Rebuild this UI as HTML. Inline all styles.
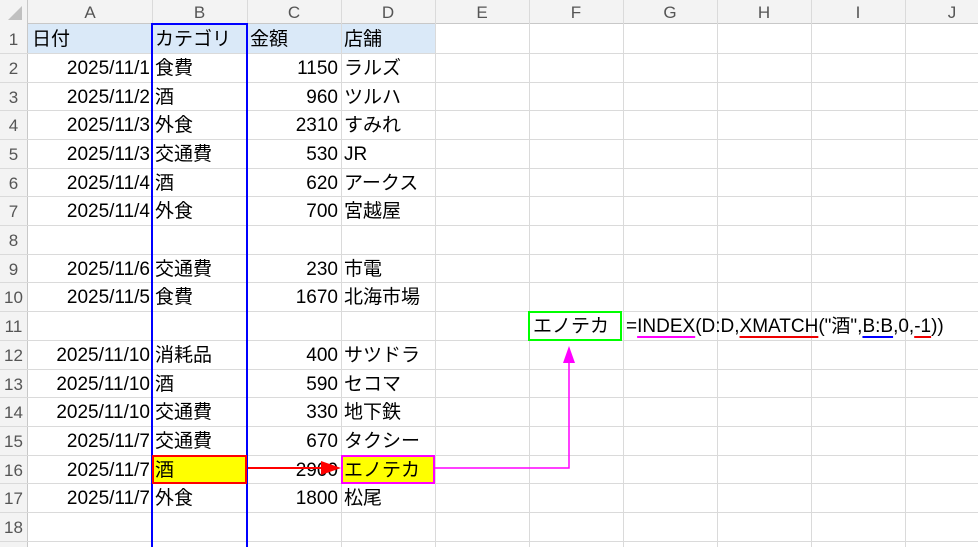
<!DOCTYPE html><html><head><meta charset="utf-8"><style>
*{margin:0;padding:0;box-sizing:border-box}
html{width:978px;height:547px;overflow:hidden}
body{width:978px;height:547px;overflow:hidden;background:#fff;position:relative;font-family:"Liberation Sans","Noto Sans CJK JP",sans-serif;font-size:19px;color:#000}
.vl{position:absolute;top:0;height:547px;width:1px;background:#dadada}
.hl{position:absolute;left:0;right:0;height:1px;background:#dadada}
#ch{position:absolute;left:0;top:0;width:978px;height:24px;background:#f3f3f3;border-bottom:1px solid #c8c8c8}
#rh{position:absolute;left:0;top:0;width:28px;height:547px;background:#f3f3f3;border-right:1px solid #c8c8c8}
.c{position:absolute;top:0;height:24px;line-height:25px;text-align:center;color:#555;font-size:17px}
.rn{position:absolute;left:0;width:27px;text-align:center;color:#555;font-size:17px;height:28.7px;line-height:32px}
.row{position:absolute;left:0;height:28.7px;width:978px;line-height:32px}
.row span{position:absolute;white-space:nowrap}
.a{right:828px}.b{left:155px}.cc{right:640px}.d{left:344px}
</style></head><body>
<div id="ch"></div><div id="rh"></div>
<div style="position:absolute;left:28px;top:24px;width:407px;height:29px;background:#dae9f8"></div>
<div style="position:absolute;left:152px;top:455px;width:95px;height:29px;background:#ffff00"></div>
<div style="position:absolute;left:341px;top:455px;width:94px;height:29px;background:#ffff00"></div>
<div class="vl" style="left:152px"></div><div class="vl" style="left:247px"></div><div class="vl" style="left:341px"></div><div class="vl" style="left:435px"></div><div class="vl" style="left:529px"></div><div class="vl" style="left:623px"></div><div class="vl" style="left:717px"></div><div class="vl" style="left:811px"></div><div class="vl" style="left:905px"></div>
<div class="hl" style="top:53px"></div><div class="hl" style="top:81.5px"></div><div class="hl" style="top:110px"></div><div class="hl" style="top:139px"></div><div class="hl" style="top:167.5px"></div><div class="hl" style="top:196px"></div><div class="hl" style="top:225px"></div><div class="hl" style="top:253.5px"></div><div class="hl" style="top:282px"></div><div class="hl" style="top:311px"></div><div class="hl" style="top:340px"></div><div class="hl" style="top:368.5px"></div><div class="hl" style="top:397px"></div><div class="hl" style="top:426px"></div><div class="hl" style="top:454.5px"></div><div class="hl" style="top:483px"></div><div class="hl" style="top:512px"></div><div class="hl" style="top:540.5px"></div>
<svg style="position:absolute;left:4px;top:4px" width="20" height="18"><polygon points="18,2 18,16 4,16" fill="#c0c0c0"/></svg>
<div class="c" style="left:28px;width:124px">A</div><div class="c" style="left:152px;width:95px">B</div><div class="c" style="left:247px;width:94px">C</div><div class="c" style="left:341px;width:94px">D</div><div class="c" style="left:435px;width:94px">E</div><div class="c" style="left:529px;width:94px">F</div><div class="c" style="left:623px;width:94px">G</div><div class="c" style="left:717px;width:94px">H</div><div class="c" style="left:811px;width:94px">I</div><div class="c" style="left:905px;width:94px">J</div>
<div class="rn" style="top:24px">1</div><div class="rn" style="top:53px">2</div><div class="rn" style="top:81.5px">3</div><div class="rn" style="top:110px">4</div><div class="rn" style="top:139px">5</div><div class="rn" style="top:167.5px">6</div><div class="rn" style="top:196px">7</div><div class="rn" style="top:225px">8</div><div class="rn" style="top:253.5px">9</div><div class="rn" style="top:282px">10</div><div class="rn" style="top:311px">11</div><div class="rn" style="top:340px">12</div><div class="rn" style="top:368.5px">13</div><div class="rn" style="top:397px">14</div><div class="rn" style="top:426px">15</div><div class="rn" style="top:454.5px">16</div><div class="rn" style="top:483px">17</div><div class="rn" style="top:512px">18</div>
<div class="row" style="top:24px"><span style="left:32px">日付</span><span class="b">カテゴリ</span><span style="left:250px">金額</span><span class="d">店舗</span></div>
<div class="row" style="top:53px"><span class="a">2025/11/1</span><span class="b">食費</span><span class="cc">1150</span><span class="d">ラルズ</span></div>
<div class="row" style="top:81.5px"><span class="a">2025/11/2</span><span class="b">酒</span><span class="cc">960</span><span class="d">ツルハ</span></div>
<div class="row" style="top:110px"><span class="a">2025/11/3</span><span class="b">外食</span><span class="cc">2310</span><span class="d">すみれ</span></div>
<div class="row" style="top:139px"><span class="a">2025/11/3</span><span class="b">交通費</span><span class="cc">530</span><span class="d">JR</span></div>
<div class="row" style="top:167.5px"><span class="a">2025/11/4</span><span class="b">酒</span><span class="cc">620</span><span class="d">アークス</span></div>
<div class="row" style="top:196px"><span class="a">2025/11/4</span><span class="b">外食</span><span class="cc">700</span><span class="d">宮越屋</span></div>
<div class="row" style="top:253.5px"><span class="a">2025/11/6</span><span class="b">交通費</span><span class="cc">230</span><span class="d">市電</span></div>
<div class="row" style="top:282px"><span class="a">2025/11/5</span><span class="b">食費</span><span class="cc">1670</span><span class="d">北海市場</span></div>
<div class="row" style="top:311px"><span style="left:533px">エノテカ</span><span style="left:626px">=<u style="text-decoration-color:#f0f;text-decoration-thickness:2px;text-underline-offset:4px">INDEX</u>(D:D,<u style="text-decoration-color:#e00;text-decoration-thickness:2px;text-underline-offset:4px">XMATCH</u>("酒",<u style="text-decoration-color:#00f;text-decoration-thickness:2px;text-underline-offset:4px">B:B</u>,0,<u style="text-decoration-color:#e00;text-decoration-thickness:2px;text-underline-offset:4px">-1</u>))</span></div>
<div class="row" style="top:340px"><span class="a">2025/11/10</span><span class="b">消耗品</span><span class="cc">400</span><span class="d">サツドラ</span></div>
<div class="row" style="top:368.5px"><span class="a">2025/11/10</span><span class="b">酒</span><span class="cc">590</span><span class="d">セコマ</span></div>
<div class="row" style="top:397px"><span class="a">2025/11/10</span><span class="b">交通費</span><span class="cc">330</span><span class="d">地下鉄</span></div>
<div class="row" style="top:426px"><span class="a">2025/11/7</span><span class="b">交通費</span><span class="cc">670</span><span class="d">タクシー</span></div>
<div class="row" style="top:454.5px"><span class="a">2025/11/7</span><span class="b">酒</span><span class="cc">2900</span><span class="d">エノテカ</span></div>
<div class="row" style="top:483px"><span class="a">2025/11/7</span><span class="b">外食</span><span class="cc">1800</span><span class="d">松尾</span></div>
<div style="position:absolute;left:151px;top:23px;width:97px;height:524px;border:2px solid #0000ff;border-bottom:none"></div>
<div style="position:absolute;left:152px;top:455px;width:95px;height:29px;border:2px solid #ff0000"></div>
<div style="position:absolute;left:341px;top:455px;width:94px;height:29px;border:2px solid #ff00ff"></div>
<div style="position:absolute;left:528px;top:311px;width:94px;height:30px;border:2px solid #00ff00"></div>
<svg style="position:absolute;left:0;top:0" width="978" height="547">
<line x1="248" y1="468" x2="325" y2="468" stroke="#f00" stroke-width="2"/><polygon points="321,461 341,468 321,475" fill="#f00"/>
<polyline points="435,468 569,468 569,358" fill="none" stroke="#f0f" stroke-width="1.5"/><polygon points="563,363 569,346 575,363" fill="#f0f"/>
</svg>
</body></html>
